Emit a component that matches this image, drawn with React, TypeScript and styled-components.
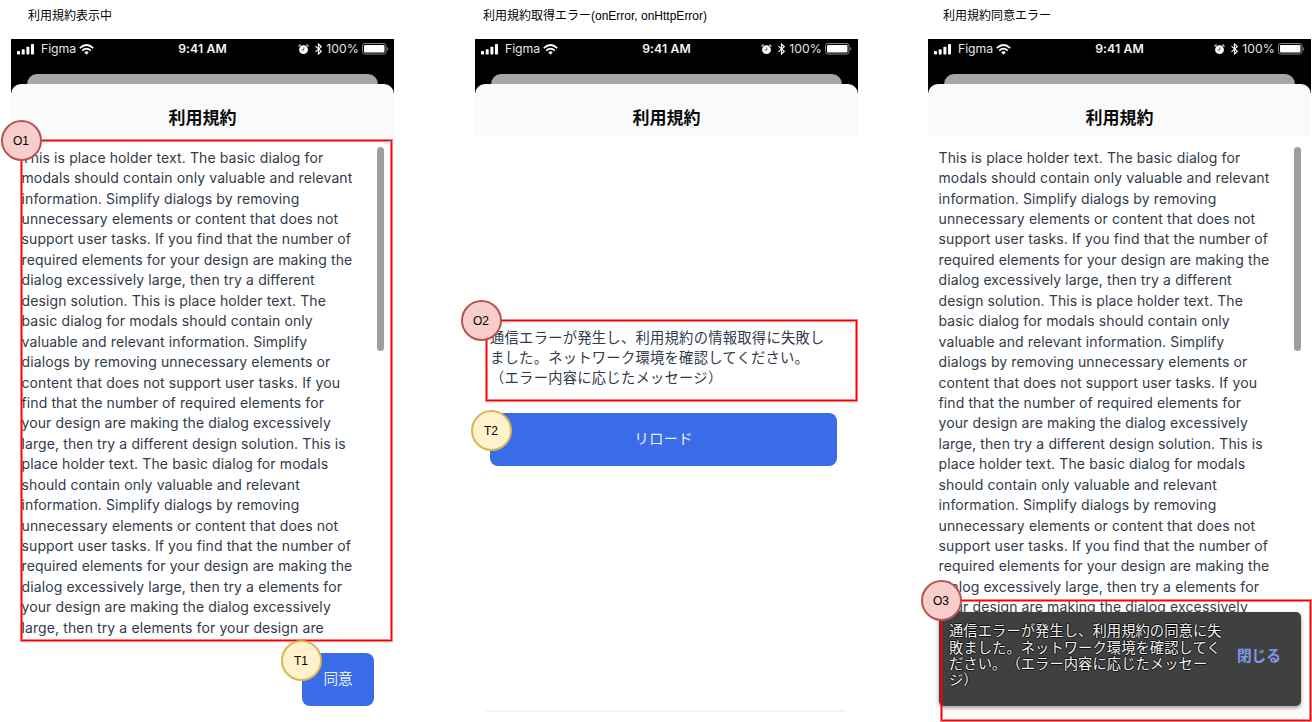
import React from "react";
import styled, { createGlobalStyle } from "styled-components";

const Global = createGlobalStyle`
  * { box-sizing: border-box; }
  body { margin: 0; background: #fff; overflow: hidden; }
`;

const uiFont = `Inter, "Noto Sans CJK JP", sans-serif`;
const noteFont = `"Liberation Sans", "Noto Sans CJK JP", sans-serif`;

const Board = styled.main`
  width: 1312px;
  height: 722px;
  padding-left: 11px;
  display: flex;
  position: relative;
  overflow: hidden;
  font-family: ${uiFont};
  text-spacing-trim: space-all;
`;

const Column = styled.section<{ $gap?: number }>`
  width: 383px;
  flex: none;
  margin-right: ${(p) => p.$gap ?? 0}px;
  display: flex;
  flex-direction: column;
`;

const Caption = styled.div<{ $indent: number }>`
  height: 39px;
  padding: 7px 0 0 ${(p) => p.$indent}px;
  font: 12px/18px ${noteFont};
  color: #000;
  white-space: nowrap;
`;

const PhoneTop = styled.div`
  height: 98px;
  display: flex;
  flex-direction: column;
  background: linear-gradient(#000 0 56px, #fff 56px);
`;

const StatusBar = styled.div`
  height: 20px;
  display: grid;
  grid-template-columns: 1fr auto 1fr;
  align-items: center;
  color: #fff;
  font-size: 12.25px;
  line-height: 20px;
`;

const StatusSide = styled.div<{ $end?: number }>`
  display: flex;
  align-items: center;
  justify-content: ${(p) => (p.$end ? "flex-end" : "flex-start")};
  padding: 0 ${(p) => p.$end ?? 0}px 0 ${(p) => (p.$end ? 0 : 6)}px;
  color: #e6e6e6;
  svg { flex: none; display: block; }
`;

const Carrier = styled.span`
  margin: 0 3px 0 7px;
  letter-spacing: -0.05px;
`;

const Clock = styled.span`
  font-weight: 600;
  letter-spacing: 0.1px;
  color: #f4f4f4;
`;

const Percent = styled.span`
  margin: 0 3px 0 4px;
  letter-spacing: 0.1px;
`;

const BackSheet = styled.div`
  height: 10px;
  margin: 15px 16px 0;
  background: #a6a6a6;
  border-radius: 10px 10px 0 0;
`;

const Header = styled.h1`
  margin: 0;
  height: 53px;
  padding-top: 13px;
  background: #fafafa;
  border-radius: 10px 10px 0 0;
  font: 700 17px/40px "Noto Sans CJK JP", sans-serif;
  color: #0a0a0a;
  text-align: center;
`;

const Scroller = styled.div`
  height: 503px;
  padding: 10.3px 10.5px 0 10.5px;
  display: flex;
  justify-content: space-between;
  align-items: flex-start;
`;

const Terms = styled.p`
  margin: 0.45px 0 0;
  color: #323a49;
  font-size: 14px;
  line-height: 20.43px;
  letter-spacing: 0.11px;
`;

const Line = styled.span`
  display: block;
  white-space: nowrap;
`;

const Thumb = styled.div`
  width: 7px;
  height: 204px;
  flex: none;
  border-radius: 4px;
  background: #9e9e9e;
`;

const Button = styled.button<{ $wide?: boolean }>`
  width: ${(p) => (p.$wide ? 347 : 72)}px;
  height: 53px;
  padding: 0 0 4px;
  border: 0;
  border-radius: 8px;
  background: #3a6ce9;
  color: #e8edfc;
  font: 14.6px/20px "Noto Sans CJK JP", sans-serif;
`;

const Footer = styled.div`
  display: flex;
  justify-content: flex-end;
  padding: 13px 20px 0 0;
`;

const ErrorBody = styled.div`
  padding: 189.5px 0 0 15px;
  display: flex;
  flex-direction: column;
`;

const ErrorText = styled.p`
  margin: 0 0 25.5px;
  color: #323a49;
  font: 14.3px/20.43px "Noto Sans CJK JP", sans-serif;
  letter-spacing: 0.25px;
`;

const Divider = styled.div`
  width: 360px;
  height: 2px;
  margin: 244px 0 0 -4px;
  background: #f3f3f3;
  box-shadow: 0 0 1px #f8f8f8;
`;

const Snackbar = styled.div`
  position: absolute;
  left: 939px;
  top: 612px;
  width: 362px;
  height: 94px;
  padding: 10.4px 20px 0 10px;
  display: flex;
  justify-content: space-between;
  background: #404040;
  border-radius: 5px;
  box-shadow: 0 2px 4px rgba(0, 0, 0, 0.4);
`;

const SnackText = styled.div`
  color: #f2f2f2;
  font: 14.3px/16.3px "Noto Sans CJK JP", sans-serif;
  letter-spacing: 0.05px;
  text-shadow: -1px 0 #111, 1px 0 #111, 0 -1px #111, 0 1px #111;
`;

const SnackAction = styled.span`
  padding-top: 23px;
  color: #7c9ae8;
  font: 700 14.7px/20px "Noto Sans CJK JP", sans-serif;
`;

const Outline = styled.div<{ $x: number; $y: number; $w: number; $h: number }>`
  position: absolute;
  left: ${(p) => p.$x + 1}px;
  top: ${(p) => p.$y + 1}px;
  width: ${(p) => p.$w - 2}px;
  height: ${(p) => p.$h - 2}px;
  border: 1px solid #ff0000;
  box-shadow: 0 0 0 1px rgba(255, 0, 0, 0.5), inset 0 0 0 1px rgba(255, 0, 0, 0.5);
`;

const Marker = styled.div<{ $x: number; $y: number; $action?: boolean }>`
  position: absolute;
  left: ${(p) => p.$x}px;
  top: ${(p) => p.$y}px;
  width: 41px;
  height: 41px;
  padding-right: 1px;
  display: flex;
  align-items: center;
  justify-content: center;
  border-radius: 50%;
  border: 2px solid ${(p) => (p.$action ? "#d6b656" : "#b85450")};
  background: ${(p) => (p.$action ? "#fff2cc" : "#f8cecc")};
  font: 12px/14px ${noteFont};
  color: #000;
`;

const terms = [
  "This is place holder text. The basic dialog for",
  "modals should contain only valuable and relevant",
  "information. Simplify dialogs by removing",
  "unnecessary elements or content that does not",
  "support user tasks. If you find that the number of",
  "required elements for your design are making the",
  "dialog excessively large, then try a different",
  "design solution. This is place holder text. The",
  "basic dialog for modals should contain only",
  "valuable and relevant information. Simplify",
  "dialogs by removing unnecessary elements or",
  "content that does not support user tasks. If you",
  "find that the number of required elements for",
  "your design are making the dialog excessively",
  "large, then try a different design solution. This is",
  "place holder text. The basic dialog for modals",
  "should contain only valuable and relevant",
  "information. Simplify dialogs by removing",
  "unnecessary elements or content that does not",
  "support user tasks. If you find that the number of",
  "required elements for your design are making the",
  "dialog excessively large, then try a elements for",
  "your design are making the dialog excessively",
  "large, then try a elements for your design are",
];

const Signal = () => (
  <svg width="17" height="11" viewBox="0 0 17 11" fill="#fff">
    <rect x="0" y="7" width="3" height="3.5" rx="0.7" />
    <rect x="4.7" y="5.2" width="3" height="5.3" rx="0.7" />
    <rect x="9.4" y="2.7" width="3" height="7.8" rx="0.7" />
    <rect x="14" y="0" width="3" height="10.5" rx="0.7" />
  </svg>
);

const Wifi = () => (
  <svg width="15" height="11" viewBox="0 0 15 11" fill="none" stroke="#fff" strokeWidth="1.8">
    <path d="M0.8 4.1Q7.5 -2 14.2 4.1" />
    <path d="M3.2 6.6Q7.5 2.7 11.8 6.6" />
    <path d="M5.2 8.2Q7.5 6.3 9.8 8.2L7.5 10.7Z" fill="#fff" stroke="none" />
  </svg>
);

const Alarm = () => (
  <svg width="11" height="11" viewBox="0 0 11 11">
    <circle cx="5.5" cy="5.7" r="4.4" fill="#fff" />
    <path d="M0.7 2.7Q1 1 2.8 0.7M10.3 2.7Q10 1 8.2 0.7" stroke="#fff" strokeWidth="1.1" fill="none" />
    <path d="M5.8 3.4V6H3.4" stroke="#333" strokeWidth="0.8" fill="none" />
  </svg>
);

const Bluetooth = () => (
  <svg width="7" height="12" viewBox="0 0 7 12" fill="none" stroke="#fff" strokeWidth="1.15">
    <path d="M0.5 3.2L6.2 8.4L3.5 11V1L6.2 3.6L0.5 8.8" />
  </svg>
);

const Battery = () => (
  <svg width="27" height="12" viewBox="0 0 27 12">
    <rect x="0.5" y="0.5" width="23.5" height="10.5" rx="2.3" fill="none" stroke="#858585" />
    <rect x="2" y="2" width="20.5" height="7.5" rx="1" fill="#fff" />
    <path d="M25.2 4v4q1-.7 1-2t-1-2" fill="#858585" />
  </svg>
);

const IconGap = styled.span`
  width: 6px;
`;

const Top = ({ inset = 6 }: { inset?: number }) => (
  <PhoneTop>
    <StatusBar>
      <StatusSide>
        <Signal />
        <Carrier>Figma</Carrier>
        <Wifi />
      </StatusSide>
      <Clock>9:41 AM</Clock>
      <StatusSide $end={inset}>
        <Alarm />
        <IconGap />
        <Bluetooth />
        <Percent>100%</Percent>
        <Battery />
      </StatusSide>
    </StatusBar>
    <BackSheet />
    <Header>利用規約</Header>
  </PhoneTop>
);

const TermsView = ({ count = terms.length }: { count?: number }) => (
  <Scroller>
    <Terms>
      {terms.slice(0, count).map((t, i) => (
        <Line key={i}>{t}</Line>
      ))}
    </Terms>
    <Thumb />
  </Scroller>
);

export default function App() {
  return (
    <Board>
      <Global />
      <Column $gap={81}>
        <Caption $indent={17}>利用規約表示中</Caption>
        <Top inset={5} />
        <TermsView />
        <Footer>
          <Button>同意</Button>
        </Footer>
      </Column>
      <Column $gap={70}>
        <Caption $indent={8}>利用規約取得エラー(onError, onHttpError)</Caption>
        <Top />
        <ErrorBody>
          <ErrorText>
            <Line>通信エラーが発生し、利用規約の情報取得に失敗し</Line>
            <Line>ました。ネットワーク環境を確認してください。</Line>
            <Line>（エラー内容に応じたメッセージ）</Line>
          </ErrorText>
          <Button $wide>リロード</Button>
          <Divider />
        </ErrorBody>
      </Column>
      <Column>
        <Caption $indent={15}>利用規約同意エラー</Caption>
        <Top />
        <TermsView count={23} />
      </Column>
      <Snackbar>
        <SnackText>
          <Line>通信エラーが発生し、利用規約の同意に失</Line>
          <Line>敗ました。ネットワーク環境を確認してく</Line>
          <Line>ださい。（エラー内容に応じたメッセー</Line>
          <Line>ジ）</Line>
        </SnackText>
        <SnackAction>閉じる</SnackAction>
      </Snackbar>
      <Outline $x={20} $y={139} $w={373} $h={503} />
      <Outline $x={485} $y={319} $w={373} $h={83} />
      <Outline $x={940} $y={599} $w={372} $h={123} />
      <Marker $x={1} $y={120}>O1</Marker>
      <Marker $x={461} $y={300}>O2</Marker>
      <Marker $x={921} $y={580}>O3</Marker>
      <Marker $x={281} $y={640} $action>T1</Marker>
      <Marker $x={471} $y={410} $action>T2</Marker>
    </Board>
  );
}
